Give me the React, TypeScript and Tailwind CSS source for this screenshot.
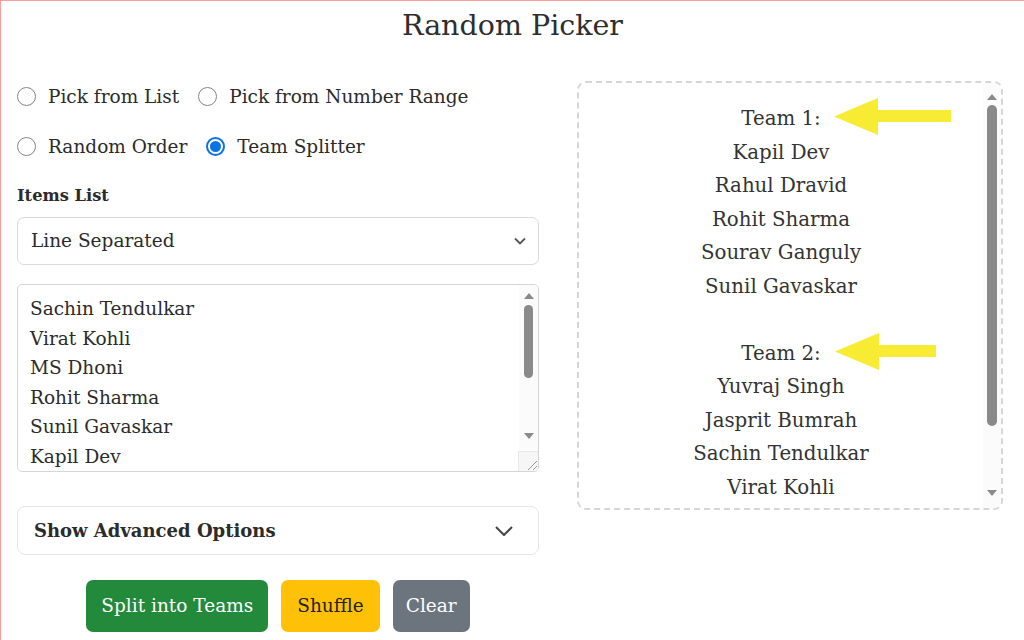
import React from "react";

const items = [
  "Sachin Tendulkar",
  "Virat Kohli",
  "MS Dhoni",
  "Rohit Sharma",
  "Sunil Gavaskar",
  "Kapil Dev",
];

const team1 = ["Kapil Dev", "Rahul Dravid", "Rohit Sharma", "Sourav Ganguly", "Sunil Gavaskar"];
const team2 = ["Yuvraj Singh", "Jasprit Bumrah", "Sachin Tendulkar", "Virat Kohli"];

function Radio({ label, checked }: { label: string; checked?: boolean }) {
  return (
    <label className="flex items-center gap-[12px]">
      {checked ? (
        <span className="flex h-[19px] w-[19px] items-center justify-center rounded-full border-[2px] border-[#0a74e6]">
          <span className="h-[11px] w-[11px] rounded-full bg-[#0a74e6]" />
        </span>
      ) : (
        <span className="h-[19px] w-[19px] rounded-full border-[1.5px] border-[#858585] bg-white" />
      )}
      <span>{label}</span>
    </label>
  );
}

function Arrow({ shaft }: { shaft: number }) {
  const w = 44 + shaft;
  return (
    <svg width={w} height={37} viewBox={`0 0 ${w} 37`}>
      <polygon points={`0,18.5 44,0 44,12 ${w},12 ${w},24 44,24 44,37`} fill="#f7ec33" />
    </svg>
  );
}

function ScrollArrow({ up }: { up?: boolean }) {
  return (
    <svg width="10" height="6" viewBox="0 0 10 6">
      <polygon points={up ? "0,6 5,0 10,6" : "0,0 10,0 5,6"} fill="#8a8a8a" />
    </svg>
  );
}

export default function App() {
  return (
    <div className="min-h-screen border-l border-t border-[#ff9d9d] bg-white font-['DejaVu_Serif',serif] text-[#2b2b2b]">
      <h1 className="pt-[7px] text-center text-[28.5px] leading-[35px] text-[#2e2e2e]">Random Picker</h1>

      <div className="mt-[38px] flex items-start">
        {/* left column */}
        <div className="ml-[16px] w-[522px] text-[18.5px]">
          <div className="flex h-[31px] items-center gap-[19px]">
            <Radio label="Pick from List" />
            <Radio label="Pick from Number Range" />
          </div>
          <div className="mt-[19px] flex h-[31px] items-center gap-[19px]">
            <Radio label="Random Order" />
            <Radio label="Team Splitter" checked />
          </div>
          <div className="mt-[19px] flex h-[31px] items-center font-bold text-[16.3px]">Items List</div>

          <div className="mt-[5px] flex h-[48px] items-center justify-between rounded-[7px] border border-[#dadada] pl-[13px] pr-[12px]">
            <span>Line Separated</span>
            <svg width="12" height="8" viewBox="0 0 12 8" fill="none" stroke="#555" strokeWidth="1.8">
              <path d="M1 1.5l5 5 5-5" />
            </svg>
          </div>

          <div className="relative mt-[19px] flex h-[188px] overflow-hidden rounded-[5px] border border-[#d6d6d6]">
            <div className="flex-1 pl-[12px] pt-[9px] leading-[29.6px]">
              {items.map((t) => (
                <div key={t}>{t}</div>
              ))}
            </div>
            <div className="flex w-[19px] flex-col items-center bg-[#fbfbfb]">
              <div className="mt-[8px]">
                <ScrollArrow up />
              </div>
              <div className="mt-[6px] h-[73px] w-[9px] rounded-full bg-[#8a8a8a]" />
              <div className="mt-[55px]">
                <ScrollArrow />
              </div>
            </div>
            <div className="absolute bottom-0 right-0 h-[20px] w-[20px] border-l border-t border-[#e8e8e8] bg-[#f6f6f6]">
              <svg width="20" height="20" viewBox="0 0 20 20" stroke="#999" strokeWidth="1">
                <path d="M9 18L18 9M14 18L18 14" />
              </svg>
            </div>
          </div>

          <div className="mt-[34px] flex h-[49px] items-center justify-between rounded-[8px] border border-[#e6e6e6] pl-[16px] pr-[25px]">
            <span className="text-[18px] font-bold">Show Advanced Options</span>
            <svg width="18" height="10" viewBox="0 0 18 10" fill="none" stroke="#444" strokeWidth="2">
              <path d="M1 1l8 8 8-8" />
            </svg>
          </div>

          <div className="mt-[25px] flex justify-center gap-[13px] text-[18.5px]">
            <button className="h-[52px] rounded-[7px] bg-[#238a3c] px-[15px] text-white">Split into Teams</button>
            <button className="h-[52px] rounded-[7px] bg-[#ffc107] px-[16px] text-[#222]">Shuffle</button>
            <button className="h-[52px] rounded-[7px] bg-[#6c757d] px-[13px] text-white">Clear</button>
          </div>
        </div>

        {/* right column: result */}
        <div className="relative ml-[38px] flex h-[429px] w-[426px] overflow-hidden rounded-[9px] border-2 border-dashed border-[#d6d6d6]">
          <div className="flex-1 pt-[19px] text-center text-[19.8px] leading-[33.5px] text-[#333]">
            <div>Team 1:</div>
            {team1.map((t) => (
              <div key={t}>{t}</div>
            ))}
            <div>&nbsp;</div>
            <div>Team 2:</div>
            {team2.map((t) => (
              <div key={t}>{t}</div>
            ))}
          </div>
          <div className="flex w-[18px] flex-col items-center bg-[#fbfbfb]">
            <div className="mt-[11px]">
              <ScrollArrow up />
            </div>
            <div className="mt-[5px] h-[321px] w-[10px] rounded-full bg-[#8a8a8a]" />
            <div className="mt-[64px]">
              <ScrollArrow />
            </div>
          </div>
          <div className="absolute left-[255px] top-[15px]">
            <Arrow shaft={73} />
          </div>
          <div className="absolute left-[256px] top-[250px]">
            <Arrow shaft={57} />
          </div>
        </div>
      </div>
    </div>
  );
}
